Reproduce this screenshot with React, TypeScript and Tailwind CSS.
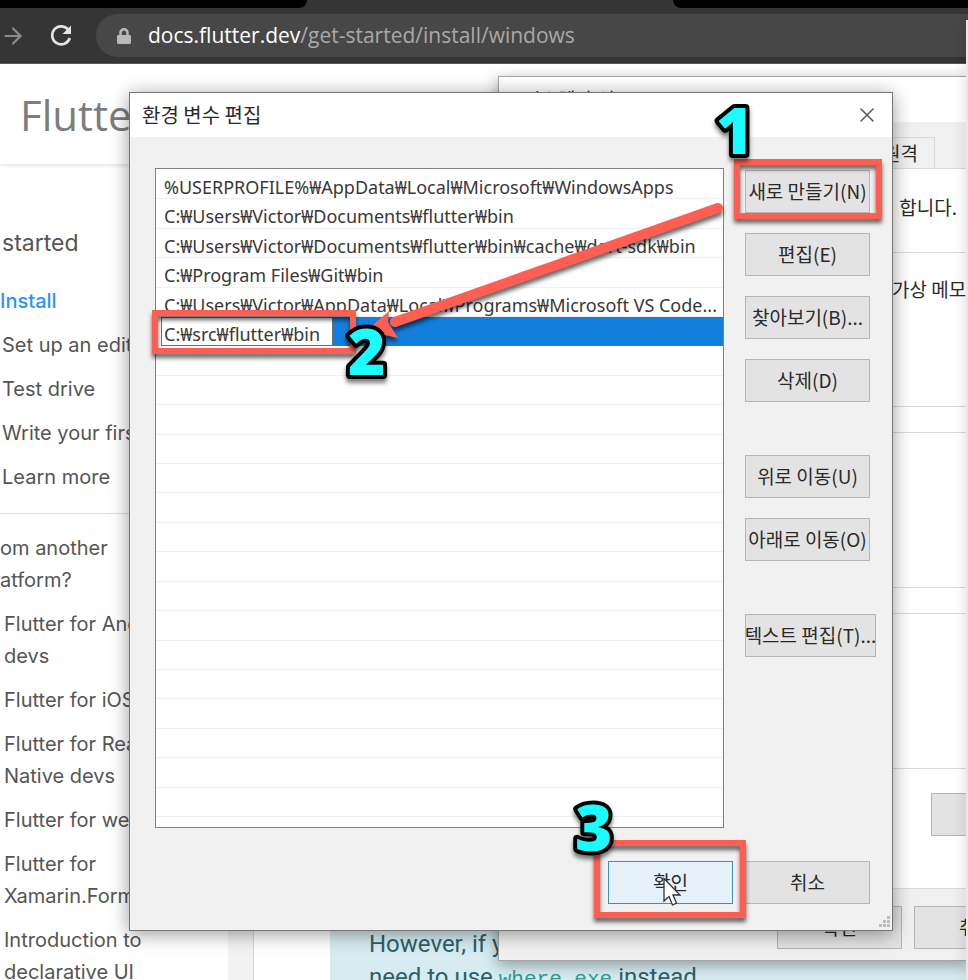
import { ArrowRight, X } from "lucide-react";
import { FaLock } from "react-icons/fa";
import type { ReactNode } from "react";

const paths = [
  "%USERPROFILE%₩AppData₩Local₩Microsoft₩WindowsApps",
  "C:₩Users₩Victor₩Documents₩flutter₩bin",
  "C:₩Users₩Victor₩Documents₩flutter₩bin₩cache₩dart-sdk₩bin",
  "C:₩Program Files₩Git₩bin",
  "C:₩Users₩Victor₩AppData₩Local₩Programs₩Microsoft VS Code...",
];

const emptyRows = Array.from({ length: 16 }, (_, i) => i);

const buttonGroups = [
  ["새로 만들기(N)", "편집(E)", "찾아보기(B)...", "삭제(D)"],
  ["위로 이동(U)", "아래로 이동(O)"],
];

const startLinks = ["Set up an editor", "Test drive", "Write your first app", "Learn more"];
const platformLinks = [
  ["Flutter for Android", "devs"],
  ["Flutter for iOS devs"],
  ["Flutter for React", "Native devs"],
  ["Flutter for web devs"],
  ["Flutter for", "Xamarin.Forms devs"],
  ["Introduction to", "declarative UI"],
];

function WinButton({ children, className = "" }: { children: ReactNode; className?: string }) {
  return (
    <button
      type="button"
      className={`flex h-[43px] min-w-[125px] items-center justify-center border border-[#b5b5b5] bg-[#e3e3e3] text-[19px] whitespace-nowrap text-[#2a2a2a] ${className}`}
    >
      {children}
    </button>
  );
}

function BrowserBar() {
  return (
    <div className="shrink-0 bg-[#353535]">
      <div className="flex h-2 justify-between">
        <div className="w-[307px] rounded-br-lg bg-black" />
        <div className="w-[295px] rounded-bl-lg bg-black" />
      </div>
      <div className="flex h-14 items-center gap-6 border-b border-[#5a5a5a]">
        <button type="button" aria-label="Forward" className="text-[#8b8b8b]">
          <ArrowRight size={26} strokeWidth={2} />
        </button>
        <button type="button" aria-label="Reload" className="text-[#e4e4e4]">
          <svg width="22" height="24" viewBox="1 0 22 24" fill="none">
            <path d="M19.6 6.2A9 9 0 1 0 20.8 14" stroke="currentColor" strokeWidth="2.6" />
            <path d="M22 1.5V10h-8.5z" fill="currentColor" />
          </svg>
        </button>
        <div className="flex h-[43px] flex-1 items-center gap-4 rounded-l-full bg-[#474747] pl-5">
          <FaLock size={16} color="#b9b9b9" />
          <p className="font-['Open_Sans',sans-serif] text-[21px] text-[#a9a9a9]">
            <span className="text-white">docs.flutter.dev</span>/get-started/install/windows
          </p>
        </div>
      </div>
    </div>
  );
}

function DocsPage() {
  return (
    <>
      <header className="flex h-[100px] shrink-0 items-center bg-white pl-5 text-[42px] text-[#7d7d7d] shadow-[0_1px_4px_rgba(0,0,0,0.15)]">
        <span className="font-['Open_Sans',sans-serif]">Flutter</span>
      </header>
      <div className="flex min-h-0 flex-1 overflow-hidden">
        <nav className="w-[228px] shrink-0 pt-[63px] font-[Inter,sans-serif] text-[20px] leading-8 whitespace-nowrap text-[#555]">
          <p className="pl-0.5 text-[23px] leading-8">started</p>
          <a href="#install" className="mt-[26px] block font-medium text-[#2b95ee]">Install</a>
          <ul className="mt-3 flex flex-col gap-3 pl-0.5">
            {startLinks.map((t) => (
              <li key={t}><a href="#start">{t}</a></li>
            ))}
          </ul>
          <hr className="mt-5 mb-[18px] border-[#dedede]" />
          <p>om another<br />atform?</p>
          <ul className="mt-3 flex flex-col gap-3 pl-1">
            {platformLinks.map((lines) => (
              <li key={lines[0]}>
                <a href="#platform">
                  {lines.map((l) => (
                    <span key={l} className="block">{l}</span>
                  ))}
                </a>
              </li>
            ))}
          </ul>
        </nav>
        <div className="w-[26px] shrink-0 border-r border-[#d5d5d5] bg-[#f2f2f2]" />
        <main className="flex-1 pt-[740px] pl-[76px]">
          <p className="h-[120px] bg-[#d6ecf1] pt-6 pl-[39px] font-[Roboto,sans-serif] text-[24px] leading-[33px] whitespace-nowrap text-[#2c6068]">
            However, if you
            <br />
            need to use <code className="font-['Liberation_Mono',monospace] text-[21px] text-[#2b9d94]">where.exe</code> instead.
          </p>
        </main>
      </div>
    </>
  );
}

function SystemProperties() {
  return (
    <section className="absolute top-[76px] right-0 left-[498px] flex h-[885px] flex-col overflow-hidden border border-[#a5a5a5] bg-[#f0f0f0] shadow-[0_4px_14px_rgba(0,0,0,0.35)]">
      <h2 className="h-[45px] shrink-0 bg-white pt-2.5 pl-6 text-[19px] leading-6">시스템 속성</h2>
      <div className="flex h-[46px] shrink-0 items-end justify-end pr-8">
        <div className="flex h-[31px] w-[70px] items-center justify-end border border-b-0 border-[#dadada] pr-4 text-[19px]">원격</div>
      </div>
      <div className="flex flex-1 flex-col border-t border-b border-[#dadada] bg-white text-[19px] leading-6">
        <p className="h-[84px] border-b border-[#dadada] pt-[26px] pr-2.5 text-right">합니다.</p>
        <p className="h-[154px] border-b border-[#dadada] pt-6 pl-[393px] whitespace-nowrap">가상 메모</p>
        <div className="mt-[25px] h-[156px] border-y border-[#dadada]" />
        <div className="mt-[25px] h-[156px] border-y border-[#dadada]" />
        <div className="mt-6 flex justify-end">
          <WinButton className="-mr-[89px]">{""}</WinButton>
        </div>
      </div>
      <div className="flex h-[71px] shrink-0 gap-3 pt-[17px] pl-[278px]">
        <WinButton className="shrink-0">확인</WinButton>
        <WinButton className="shrink-0">취소</WinButton>
      </div>
    </section>
  );
}

function EditDialog() {
  return (
    <section
      role="dialog"
      aria-labelledby="dialog-title"
      className="absolute top-[92px] left-[129px] flex w-[764px] flex-col border border-[#767676] bg-[#f1f1f1] shadow-[0_3px_18px_rgba(0,0,0,0.4)]"
    >
      <header className="flex h-11 items-center justify-between bg-white pr-[13px] pl-3">
        <h1 id="dialog-title" className="text-[20px] text-[#2a2a2a]">환경 변수 편집</h1>
        <button type="button" aria-label="닫기" className="text-[#555]">
          <X size={24} strokeWidth={1.5} absoluteStrokeWidth className="block" />
        </button>
      </header>
      <div className="flex gap-[21px] pt-[31px] pl-[25px]">
        <div className="h-[660px] w-[569px] border border-[#828282] bg-white pt-px font-['Noto_Sans','Noto_Sans_CJK_KR',sans-serif] text-[18px] text-[#383838]">
          <ul className="grid h-[647px] grid-rows-[repeat(22,minmax(0,1fr))]">
            {paths.map((p) => (
              <li key={p} className="border-b border-[#f1f1f1] pt-[7px] pl-2 leading-5 whitespace-nowrap">
                {p}
              </li>
            ))}
            <li className="flex items-stretch pl-[5px]">
              <div className="flex flex-1 bg-[#137fdc]">
                <input
                  aria-label="경로"
                  defaultValue="C:₩src₩flutter₩bin"
                  className="w-[172px] border border-[#6d6d6d] bg-white pt-1 pl-0.5 leading-5 outline-none"
                />
              </div>
            </li>
            {emptyRows.map((r) => (
              <li key={r} className="border-b border-[#f1f1f1]" />
            ))}
          </ul>
        </div>
        <div className="flex flex-col items-start gap-[53px] pt-0.5">
          {buttonGroups.map((group) => (
            <div key={group[0]} className="flex flex-col gap-5">
              {group.map((label) => (
                <WinButton key={label}>{label}</WinButton>
              ))}
            </div>
          ))}
          <WinButton className="w-[131px]">텍스트 편집(T)...</WinButton>
        </div>
      </div>
      <footer className="flex justify-end gap-3 pt-[33px] pr-[22px] pb-[26px]">
        <button type="button" className="h-[43px] w-[125px] border border-[#3e8ccc] bg-[#e6f2fb] text-[19px] text-[#2a2a2a]">
          확인
        </button>
        <WinButton>취소</WinButton>
      </footer>
      <svg className="absolute right-0.5 bottom-0.5 fill-[#bdbdbd]" width="12" height="12" viewBox="0 0 12 12">
        <path d="M9 0h3v3H9zM9 4h3v3H9zM5 4h3v3H5zM9 8h3v3H9zM5 8h3v3H5zM1 8h3v3H1z" />
      </svg>
    </section>
  );
}

function Step({ n, className }: { n: number; className: string }) {
  return (
    <svg
      width="56"
      height="72"
      viewBox="0 0 56 72"
      className={`absolute font-['Open_Sans',sans-serif] text-[64px] font-extrabold drop-shadow-[0_4px_2px_rgba(0,0,0,0.5)] ${className}`}
    >
      <text x="8" y="56" fill="#1cfbff" stroke="#000" strokeWidth="8" strokeLinejoin="round" paintOrder="stroke">
        {n}
      </text>
    </svg>
  );
}

function Annotations() {
  const frame = "absolute border-6 border-[#ff5f52] drop-shadow-[0_4px_2px_rgba(0,0,0,0.6)]";
  return (
    <div className="pointer-events-none absolute inset-0 overflow-hidden">
      <div className={`${frame} top-[159px] left-[734px] h-[60px] w-[148px]`} />
      <div className={`${frame} top-[310px] left-[152px] h-[44px] w-[204px]`} />
      <div className={`${frame} top-[840px] left-[594px] h-[78px] w-[152px]`} />
      <svg
        className="absolute top-[190px] left-[350px] drop-shadow-[0_4px_2px_rgba(0,0,0,0.6)]"
        width="390"
        height="160"
        viewBox="350 190 390 160"
      >
        <path d="M718 208L395 322" stroke="#ff5f52" strokeWidth="10" strokeLinecap="round" />
        <path d="M366 331L389 311L388 322L398 338z" fill="#ff5f52" />
      </svg>
      <Step n={1} className="top-[98px] left-[708px]" />
      <Step n={2} className="top-[319px] left-[340px]" />
      <Step n={3} className="top-[795px] left-[567px]" />
      <svg className="absolute top-[877px] left-[662px]" width="22" height="30" viewBox="0 0 22 30">
        <path d="M2 1.500V24l5-4.500L10.500 28l4-1.800L11 18h7z" fill="#fff" stroke="#333" strokeWidth="1.300" />
      </svg>
    </div>
  );
}

export default function App() {
  return (
    <div className="relative flex h-screen flex-col overflow-hidden bg-white font-['Noto_Sans_CJK_KR',sans-serif] text-[#2a2a2a]">
      <BrowserBar />
      <DocsPage />
      <SystemProperties />
      <div className="absolute top-5 right-0 bottom-0 w-0.5 bg-[#e8e8e8] shadow-[0_0_12px_rgba(0,0,0,0.4)]" />
      <EditDialog />
      <Annotations />
    </div>
  );
}
